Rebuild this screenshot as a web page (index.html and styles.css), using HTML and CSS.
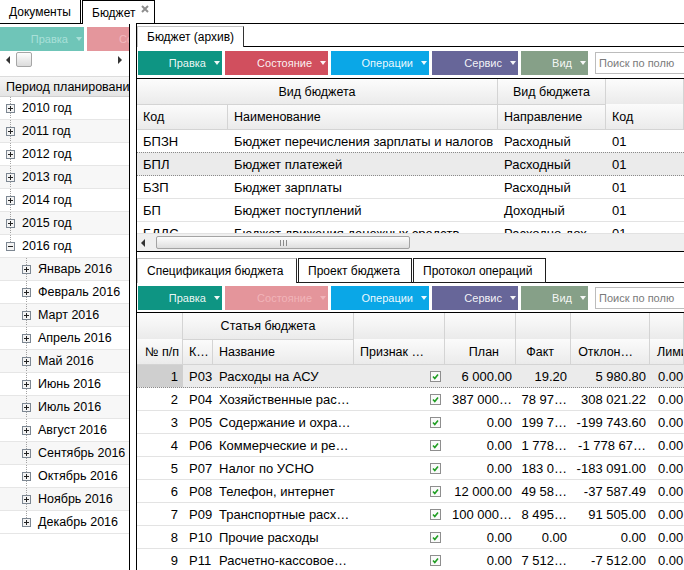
FILE: index.html
```html
<!DOCTYPE html>
<html lang="ru">
<head>
<meta charset="utf-8">
<title>Бюджет</title>
<link rel="stylesheet" href="styles.css">
</head>
<body>
<div class="app">
  <div class="doc-tabs">
    <div class="dtab dtab-docs">Документы</div>
    <div class="dtab dtab-gap"></div>
    <div class="dtab dtab-budget">Бюджет<svg class="close" width="8" height="8" viewBox="0 0 8 8"><path d="M1 1L7 7M7 1L1 7" stroke="#8e8e8e" stroke-width="2"/></svg></div>
    <div class="dtab dtab-fill"></div>
  </div>

  <div class="left">
    <div class="toolbar ltoolbar">
      <div class="btn w-edit teal-f">Правка<i class="caret"></i></div>
      <div class="btn w-state red-f">Состояние<i class="caret"></i></div>
    </div>
    <div class="lscroll">
      <i class="arr-l"></i>
      <span class="lthumb"></span>
      <i class="arr-r"></i>
    </div>
    <div class="lhead">Период планирования</div>
    <div class="tree">
      <div class="trow yr"><svg class="exp" width="9" height="9" viewBox="0 0 9 9"><rect x=".5" y=".5" width="8" height="8" fill="#f3f3f3" stroke="#7d8792"/><path d="M2 4.5h5M4.5 2v5" stroke="#222"/></svg>2010 год</div>
      <div class="trow yr alt"><svg class="exp" width="9" height="9" viewBox="0 0 9 9"><rect x=".5" y=".5" width="8" height="8" fill="#f3f3f3" stroke="#7d8792"/><path d="M2 4.5h5M4.5 2v5" stroke="#222"/></svg>2011 год</div>
      <div class="trow yr"><svg class="exp" width="9" height="9" viewBox="0 0 9 9"><rect x=".5" y=".5" width="8" height="8" fill="#f3f3f3" stroke="#7d8792"/><path d="M2 4.5h5M4.5 2v5" stroke="#222"/></svg>2012 год</div>
      <div class="trow yr alt"><svg class="exp" width="9" height="9" viewBox="0 0 9 9"><rect x=".5" y=".5" width="8" height="8" fill="#f3f3f3" stroke="#7d8792"/><path d="M2 4.5h5M4.5 2v5" stroke="#222"/></svg>2013 год</div>
      <div class="trow yr"><svg class="exp" width="9" height="9" viewBox="0 0 9 9"><rect x=".5" y=".5" width="8" height="8" fill="#f3f3f3" stroke="#7d8792"/><path d="M2 4.5h5M4.5 2v5" stroke="#222"/></svg>2014 год</div>
      <div class="trow yr alt"><svg class="exp" width="9" height="9" viewBox="0 0 9 9"><rect x=".5" y=".5" width="8" height="8" fill="#f3f3f3" stroke="#7d8792"/><path d="M2 4.5h5M4.5 2v5" stroke="#222"/></svg>2015 год</div>
      <div class="trow yr end"><svg class="exp" width="9" height="9" viewBox="0 0 9 9"><rect x=".5" y=".5" width="8" height="8" fill="#f3f3f3" stroke="#7d8792"/><path d="M2 4.5h5" stroke="#222"/></svg>2016 год</div>
      <div class="trow mo alt"><svg class="exp" width="9" height="9" viewBox="0 0 9 9"><rect x=".5" y=".5" width="8" height="8" fill="#f3f3f3" stroke="#7d8792"/><path d="M2 4.5h5M4.5 2v5" stroke="#222"/></svg>Январь 2016</div>
      <div class="trow mo"><svg class="exp" width="9" height="9" viewBox="0 0 9 9"><rect x=".5" y=".5" width="8" height="8" fill="#f3f3f3" stroke="#7d8792"/><path d="M2 4.5h5M4.5 2v5" stroke="#222"/></svg>Февраль 2016</div>
      <div class="trow mo alt"><svg class="exp" width="9" height="9" viewBox="0 0 9 9"><rect x=".5" y=".5" width="8" height="8" fill="#f3f3f3" stroke="#7d8792"/><path d="M2 4.5h5M4.5 2v5" stroke="#222"/></svg>Март 2016</div>
      <div class="trow mo"><svg class="exp" width="9" height="9" viewBox="0 0 9 9"><rect x=".5" y=".5" width="8" height="8" fill="#f3f3f3" stroke="#7d8792"/><path d="M2 4.5h5M4.5 2v5" stroke="#222"/></svg>Апрель 2016</div>
      <div class="trow mo alt"><svg class="exp" width="9" height="9" viewBox="0 0 9 9"><rect x=".5" y=".5" width="8" height="8" fill="#f3f3f3" stroke="#7d8792"/><path d="M2 4.5h5M4.5 2v5" stroke="#222"/></svg>Май 2016</div>
      <div class="trow mo"><svg class="exp" width="9" height="9" viewBox="0 0 9 9"><rect x=".5" y=".5" width="8" height="8" fill="#f3f3f3" stroke="#7d8792"/><path d="M2 4.5h5M4.5 2v5" stroke="#222"/></svg>Июнь 2016</div>
      <div class="trow mo alt"><svg class="exp" width="9" height="9" viewBox="0 0 9 9"><rect x=".5" y=".5" width="8" height="8" fill="#f3f3f3" stroke="#7d8792"/><path d="M2 4.5h5M4.5 2v5" stroke="#222"/></svg>Июль 2016</div>
      <div class="trow mo"><svg class="exp" width="9" height="9" viewBox="0 0 9 9"><rect x=".5" y=".5" width="8" height="8" fill="#f3f3f3" stroke="#7d8792"/><path d="M2 4.5h5M4.5 2v5" stroke="#222"/></svg>Август 2016</div>
      <div class="trow mo alt"><svg class="exp" width="9" height="9" viewBox="0 0 9 9"><rect x=".5" y=".5" width="8" height="8" fill="#f3f3f3" stroke="#7d8792"/><path d="M2 4.5h5M4.5 2v5" stroke="#222"/></svg>Сентябрь 2016</div>
      <div class="trow mo"><svg class="exp" width="9" height="9" viewBox="0 0 9 9"><rect x=".5" y=".5" width="8" height="8" fill="#f3f3f3" stroke="#7d8792"/><path d="M2 4.5h5M4.5 2v5" stroke="#222"/></svg>Октябрь 2016</div>
      <div class="trow mo alt"><svg class="exp" width="9" height="9" viewBox="0 0 9 9"><rect x=".5" y=".5" width="8" height="8" fill="#f3f3f3" stroke="#7d8792"/><path d="M2 4.5h5M4.5 2v5" stroke="#222"/></svg>Ноябрь 2016</div>
      <div class="trow mo end"><svg class="exp" width="9" height="9" viewBox="0 0 9 9"><rect x=".5" y=".5" width="8" height="8" fill="#f3f3f3" stroke="#7d8792"/><path d="M2 4.5h5M4.5 2v5" stroke="#222"/></svg>Декабрь 2016</div>
    </div>
  </div>

  <div class="window">
    <div class="wtabs">
      <div class="wtab">Бюджет (архив)</div>
    </div>
    <div class="toolbar wtoolbar">
      <div class="btn w-edit teal">Правка<i class="caret"></i></div>
      <div class="btn w-state red">Состояние<i class="caret"></i></div>
      <div class="btn w-ops blue">Операции<i class="caret"></i></div>
      <div class="btn w-serv purple">Сервис<i class="caret"></i></div>
      <div class="btn w-view sage">Вид<i class="caret"></i></div>
      <input class="search" type="text" placeholder="Поиск по полю">
    </div>

    <div class="grid ugrid">
      <div class="ghead">
        <div class="hcol">
          <div class="hg-top">Вид бюджета</div>
          <div class="hg-sub">
            <div class="hc u1">Код</div>
            <div class="hc u2">Наименование</div>
          </div>
        </div>
        <div class="hcol">
          <div class="hg-top">Вид бюджета</div>
          <div class="hg-sub">
            <div class="hc u3">Направление</div>
          </div>
        </div>
        <div class="hc tall u4">Код</div>
      </div>
      <div class="gbody ubody">
        <div class="row"><div class="cell u1">БПЗН</div><div class="cell u2">Бюджет перечисления зарплаты и налогов</div><div class="cell u3">Расходный</div><div class="cell u4">01</div></div>
        <div class="row sel"><div class="cell u1">БПЛ</div><div class="cell u2">Бюджет платежей</div><div class="cell u3">Расходный</div><div class="cell u4">01</div></div>
        <div class="row"><div class="cell u1">БЗП</div><div class="cell u2">Бюджет зарплаты</div><div class="cell u3">Расходный</div><div class="cell u4">01</div></div>
        <div class="row"><div class="cell u1">БП</div><div class="cell u2">Бюджет поступлений</div><div class="cell u3">Доходный</div><div class="cell u4">01</div></div>
        <div class="row"><div class="cell u1">БДДС</div><div class="cell u2">Бюджет движения денежных средств</div><div class="cell u3">Расходно-дох…</div><div class="cell u4">01</div></div>
      </div>
      <div class="hscroll">
        <i class="arr-l"></i>
        <span class="thumb"><span class="grip"></span></span>
      </div>
    </div>

    <div class="lower">
      <div class="ltabs">
        <div class="ltab active t-spec">Спецификация бюджета</div>
        <div class="ltab t-proj">Проект бюджета</div>
        <div class="ltab t-log">Протокол операций</div>
      </div>
      <div class="toolbar wtoolbar ltb">
        <div class="btn w-edit teal">Правка<i class="caret"></i></div>
        <div class="btn w-state red-f2">Состояние<i class="caret"></i></div>
        <div class="btn w-ops blue">Операции<i class="caret"></i></div>
        <div class="btn w-serv purple">Сервис<i class="caret"></i></div>
        <div class="btn w-view sage">Вид<i class="caret"></i></div>
        <input class="search" type="text" placeholder="Поиск по полю">
      </div>

      <div class="grid lgrid">
        <div class="ghead">
          <div class="hc tall l1 nr">№ п/п</div>
          <div class="hcol">
            <div class="hg-top">Статья бюджета</div>
            <div class="hg-sub">
              <div class="hc l2">К…</div>
              <div class="hc l3">Название</div>
            </div>
          </div>
          <div class="hc tall l4">Признак …</div>
          <div class="hc tall l5 num">План</div>
          <div class="hc tall l6 num">Факт</div>
          <div class="hc tall l7 num">Отклон…</div>
          <div class="hc tall l8">Лимит</div>
        </div>
        <div class="gbody">
          <div class="row sel"><div class="cell l1 r nsel">1</div><div class="cell l2">Р03</div><div class="cell l3">Расходы на АСУ</div><div class="cell l4 r"><svg class="cb" width="11" height="11" viewBox="0 0 11 11"><rect x=".5" y=".5" width="10" height="10" fill="#fafafa" stroke="#8e8e8e"/><path d="M3 5.5l1.8 2L8 3.5" fill="none" stroke="#1f9e22" stroke-width="1.6"/></svg></div><div class="cell l5 r">6 000.00</div><div class="cell l6 r">19.20</div><div class="cell l7 r">5 980.80</div><div class="cell l8">0.00</div></div>
          <div class="row"><div class="cell l1 r">2</div><div class="cell l2">Р04</div><div class="cell l3">Хозяйственные рас…</div><div class="cell l4 r"><svg class="cb" width="11" height="11" viewBox="0 0 11 11"><rect x=".5" y=".5" width="10" height="10" fill="#fafafa" stroke="#8e8e8e"/><path d="M3 5.5l1.8 2L8 3.5" fill="none" stroke="#1f9e22" stroke-width="1.6"/></svg></div><div class="cell l5 r">387 000…</div><div class="cell l6 r">78 97…</div><div class="cell l7 r">308 021.22</div><div class="cell l8">0.00</div></div>
          <div class="row"><div class="cell l1 r">3</div><div class="cell l2">Р05</div><div class="cell l3">Содержание и охра…</div><div class="cell l4 r"><svg class="cb" width="11" height="11" viewBox="0 0 11 11"><rect x=".5" y=".5" width="10" height="10" fill="#fafafa" stroke="#8e8e8e"/><path d="M3 5.5l1.8 2L8 3.5" fill="none" stroke="#1f9e22" stroke-width="1.6"/></svg></div><div class="cell l5 r">0.00</div><div class="cell l6 r">199 7…</div><div class="cell l7 r">-199 743.60</div><div class="cell l8">0.00</div></div>
          <div class="row"><div class="cell l1 r">4</div><div class="cell l2">Р06</div><div class="cell l3">Коммерческие и ре…</div><div class="cell l4 r"><svg class="cb" width="11" height="11" viewBox="0 0 11 11"><rect x=".5" y=".5" width="10" height="10" fill="#fafafa" stroke="#8e8e8e"/><path d="M3 5.5l1.8 2L8 3.5" fill="none" stroke="#1f9e22" stroke-width="1.6"/></svg></div><div class="cell l5 r">0.00</div><div class="cell l6 r">1 778…</div><div class="cell l7 r">-1 778 67…</div><div class="cell l8">0.00</div></div>
          <div class="row"><div class="cell l1 r">5</div><div class="cell l2">Р07</div><div class="cell l3">Налог по УСНО</div><div class="cell l4 r"><svg class="cb" width="11" height="11" viewBox="0 0 11 11"><rect x=".5" y=".5" width="10" height="10" fill="#fafafa" stroke="#8e8e8e"/><path d="M3 5.5l1.8 2L8 3.5" fill="none" stroke="#1f9e22" stroke-width="1.6"/></svg></div><div class="cell l5 r">0.00</div><div class="cell l6 r">183 0…</div><div class="cell l7 r">-183 091.00</div><div class="cell l8">0.00</div></div>
          <div class="row"><div class="cell l1 r">6</div><div class="cell l2">Р08</div><div class="cell l3">Телефон, интернет</div><div class="cell l4 r"><svg class="cb" width="11" height="11" viewBox="0 0 11 11"><rect x=".5" y=".5" width="10" height="10" fill="#fafafa" stroke="#8e8e8e"/><path d="M3 5.5l1.8 2L8 3.5" fill="none" stroke="#1f9e22" stroke-width="1.6"/></svg></div><div class="cell l5 r">12 000.00</div><div class="cell l6 r">49 58…</div><div class="cell l7 r">-37 587.49</div><div class="cell l8">0.00</div></div>
          <div class="row"><div class="cell l1 r">7</div><div class="cell l2">Р09</div><div class="cell l3">Транспортные расх…</div><div class="cell l4 r"><svg class="cb" width="11" height="11" viewBox="0 0 11 11"><rect x=".5" y=".5" width="10" height="10" fill="#fafafa" stroke="#8e8e8e"/><path d="M3 5.5l1.8 2L8 3.5" fill="none" stroke="#1f9e22" stroke-width="1.6"/></svg></div><div class="cell l5 r">100 000…</div><div class="cell l6 r">8 495…</div><div class="cell l7 r">91 505.00</div><div class="cell l8">0.00</div></div>
          <div class="row"><div class="cell l1 r">8</div><div class="cell l2">Р10</div><div class="cell l3">Прочие расходы</div><div class="cell l4 r"><svg class="cb" width="11" height="11" viewBox="0 0 11 11"><rect x=".5" y=".5" width="10" height="10" fill="#fafafa" stroke="#8e8e8e"/><path d="M3 5.5l1.8 2L8 3.5" fill="none" stroke="#1f9e22" stroke-width="1.6"/></svg></div><div class="cell l5 r">0.00</div><div class="cell l6 r">0.00</div><div class="cell l7 r">0.00</div><div class="cell l8">0.00</div></div>
          <div class="row"><div class="cell l1 r">9</div><div class="cell l2">Р11</div><div class="cell l3">Расчетно-кассовое…</div><div class="cell l4 r"><svg class="cb" width="11" height="11" viewBox="0 0 11 11"><rect x=".5" y=".5" width="10" height="10" fill="#fafafa" stroke="#8e8e8e"/><path d="M3 5.5l1.8 2L8 3.5" fill="none" stroke="#1f9e22" stroke-width="1.6"/></svg></div><div class="cell l5 r">0.00</div><div class="cell l6 r">7 512…</div><div class="cell l7 r">-7 512.00</div><div class="cell l8">0.00</div></div>
        </div>
      </div>
    </div>
  </div>
</div>
</body>
</html>
```

FILE: styles.css
```css
* { box-sizing: border-box; }
html, body { margin: 0; padding: 0; }
body {
  width: 684px;
  height: 570px;
  overflow: hidden;
  background: #fff;
  font-family: "Liberation Sans", Arial, Helvetica, sans-serif;
  color: #000;
}
.app { position: relative; width: 684px; height: 570px; overflow: hidden; }

/* document tabs */
.doc-tabs { display: flex; height: 24px; }
.dtab { height: 24px; display: flex; align-items: center; font-size: 12px; white-space: nowrap; }
.dtab-docs { width: 81px; padding-left: 9px; border-right: 1px solid #000; border-bottom: 1px solid #000; }
.dtab-gap { width: 1px; border-bottom: 1px solid #000; }
.dtab-budget { width: 73px; padding-left: 9px; border: 1px solid #000; border-bottom: 0; background: #fff; }
.dtab-fill { flex: 1; border-bottom: 1px solid #000; }
.close { align-self: flex-start; margin-top: 4px; margin-left: 6px; }

/* left panel */
.left { width: 130px; height: 546px; border-right: 1px solid #000; overflow: hidden; }
.toolbar { display: flex; gap: 3px; height: 24px; }
.ltoolbar { margin-top: 3px; }
.btn {
  flex: none;
  height: 24px;
  display: flex;
  align-items: center;
  justify-content: flex-end;
  padding-right: 2px;
  font-size: 11px;
  color: rgba(255,255,255,0.93);
  white-space: nowrap;
}
.caret {
  display: block;
  width: 0; height: 0;
  margin-left: 8px;
  border-left: 3px solid transparent;
  border-right: 3px solid transparent;
  border-top: 4px solid currentColor;
}
.w-edit { width: 84px; }
.w-state { width: 103px; }
.w-ops { width: 98px; }
.w-serv { width: 86px; }
.w-view { width: 67px; }
.teal { background: #0e9583; }
.red { background: #d14f5e; }
.blue { background: #0aa7e7; }
.purple { background: #676699; }
.sage { background: #86a088; }
.teal-f { background: #6fc5b8; color: #a9e0d8; }
.red-f { background: #e4969c; color: #f2b8bc; }
.red-f2 { background: #e4959b; color: #f1b4b9; }

.lscroll { height: 17px; display: flex; align-items: center; padding-left: 6px; }
.arr-l {
  display: block; width: 0; height: 0;
  border-top: 4px solid transparent;
  border-bottom: 4px solid transparent;
  border-right: 4px solid #333;
}
.arr-r {
  display: block; width: 0; height: 0;
  border-top: 4px solid transparent;
  border-bottom: 4px solid transparent;
  border-left: 4px solid #333;
  margin-left: auto;
  margin-right: 7px;
}
.lthumb {
  width: 16px; height: 15px; margin-left: 6px;
  border: 1px solid #a6a6a6; border-radius: 2px;
  background: linear-gradient(#fdfdfd, #dcdcdc);
}
.lhead {
  margin-top: 8px;
  height: 21px;
  display: flex;
  align-items: center;
  padding-left: 6px;
  font-size: 12.5px;
  white-space: nowrap;
  background: linear-gradient(#f6f6f6, #e4e4e4);
  border-top: 1px solid #dcdcdc;
  border-bottom: 1px solid #cfcfcf;
}
.trow {
  height: 23px;
  display: flex;
  align-items: center;
  padding-left: 6px;
  font-size: 12.5px;
  white-space: nowrap;
  border-bottom: 1px solid #e6e6e6;
  background-color: #fff;
  background-image: repeating-linear-gradient(to bottom, #a2a2a2 0 1px, transparent 1px 2px);
  background-size: 1px 100%;
  background-repeat: no-repeat;
  background-position: 10px 0;
}
.trow.alt { background-color: #f7f7f7; }
.trow.mo { padding-left: 22px; background-position: 26px 0; }
.trow.end { background-size: 1px 50%; }
.exp { flex: none; margin-right: 7px; }

/* floating window */
.window {
  position: absolute;
  left: 136px;
  top: 23px;
  width: 548px;
  height: 547px;
  background: #fff;
  border-left: 1px solid #000;
  border-top: 1px solid #000;
  overflow: hidden;
}
.wtabs {
  height: 23px;
  display: flex;
  align-items: flex-end;
  background: linear-gradient(#000, #000) left bottom / 100% 1px no-repeat;
}
.wtab {
  width: 107px;
  height: 21px;
  display: flex;
  align-items: center;
  padding-left: 9px;
  font-size: 12px;
  white-space: nowrap;
  background: #fff;
  border-top: 1px solid #c4c4c4;
  border-left: 1px solid #c4c4c4;
  border-right: 1px solid #333;
}
.wtoolbar { margin-top: 4px; padding-left: 1px; }
.search {
  flex: none;
  width: 100px;
  height: 22px;
  margin-left: 4px;
  align-self: center;
  border: 1px solid #bcbcbc;
  padding: 0 3px;
  font: 11px "Liberation Sans", Arial, sans-serif;
  color: #333;
  background: #fff;
  outline: none;
}
.search::placeholder { color: #7a7a7a; }

/* grids */
.ugrid { margin-top: 3px; border-top: 1px solid #000; }
.ghead { display: flex; font-size: 12.5px; color: #000; }
.hcol { display: flex; flex-direction: column; flex: none; }
.hg-top {
  height: 26px;
  display: flex;
  align-items: center;
  justify-content: center;
  white-space: nowrap;
  background: linear-gradient(#fcfcfc, #ebebeb);
  border-right: 1px solid #d4d4d4;
  border-bottom: 1px solid #d4d4d4;
}
.hg-sub { display: flex; }
.hc {
  flex: none;
  height: 25px;
  display: flex;
  align-items: center;
  padding: 0 6px;
  white-space: nowrap;
  overflow: hidden;
  background: linear-gradient(#fbfbfb, #ebebeb);
  border-right: 1px solid #d4d4d4;
  border-bottom: 1px solid #d4d4d4;
}
.hc.tall {
  height: 51px;
  padding-top: 26px;
  background: linear-gradient(#fcfcfc, #ebebeb 50%, #fbfbfb 51%, #ebebeb);
}
.hc.num { justify-content: flex-end; padding-right: 16px; }
.hc.nr { justify-content: flex-end; padding-left: 0; padding-right: 3px; }

.u1 { width: 91px; }
.u2 { width: 270px; }
.u3 { width: 108px; }
.u4 { flex: 1; }

.ubody { height: 103px; overflow: hidden; }
.row {
  display: flex;
  height: 23px;
  border-bottom: 1px solid #e3e3e3;
  font-size: 13px;
  white-space: nowrap;
}
.row.sel {
  background: #ebebeb;
  height: 24px;
  margin-top: -1px;
  border-top: 1px dotted #8a8a8a;
  border-bottom: 1px dotted #8a8a8a;
}
.cell {
  flex: none;
  display: flex;
  align-items: center;
  padding: 0 6px;
  overflow: hidden;
}
.cell.r { justify-content: flex-end; padding: 0 4px 0 0; }
.cell.l1.r { padding-right: 5px; }
.nsel { background: #cfcfcf; }
.cb { display: block; }

.hscroll {
  height: 18px;
  display: flex;
  align-items: center;
  padding-left: 4px;
  background: #efefef;
  border-top: 1px solid #e2e2e2;
}
.thumb {
  width: 254px;
  height: 13px;
  margin-left: 11px;
  display: flex;
  align-items: center;
  justify-content: center;
  border: 1px solid #a3a3a3;
  border-radius: 2px;
  background: linear-gradient(#fdfdfd, #dedede);
}
.grip {
  width: 7px;
  height: 6px;
  background: repeating-linear-gradient(90deg, #8a8a8a 0 1px, transparent 1px 3px);
}

/* lower panel */
.lower { border-top: 1px solid #000; padding-top: 6px; }
.ltabs {
  height: 25px;
  display: flex;
  align-items: flex-end;
  gap: 1px;
  background: linear-gradient(#000, #000) left bottom / 100% 1px no-repeat;
}
.ltab {
  flex: none;
  height: 25px;
  display: flex;
  align-items: center;
  padding-left: 9px;
  font-size: 12px;
  white-space: nowrap;
  background: #fff;
  border: 1px solid #1e1e1e;
}
.ltab.active {
  border-top-color: #bdbdbd;
  border-left-color: #bdbdbd;
  border-right-color: #2a2a2a;
  border-bottom: 0;
}
.t-spec { width: 160px; }
.t-proj { width: 114px; }
.t-log { width: 133px; }
.ltb { margin-top: 3px; }

.lgrid { margin-top: 2px; border-top: 1px solid #000; }
.lgrid .hg-top { height: 27px; }
.lgrid .hc.tall {
  height: 52px;
  padding-top: 27px;
}
.l1 { width: 46px; }
.l2 { width: 30px; }
.l3 { width: 141px; }
.l4 { width: 91px; }
.l5 { width: 71px; }
.l6 { width: 55px; }
.l7 { width: 79px; }
.l8 { flex: 1; }
.hc.l8 { padding-left: 7px; padding-right: 0; }
.cell.l8 { padding-left: 8px; padding-right: 0; }
```
